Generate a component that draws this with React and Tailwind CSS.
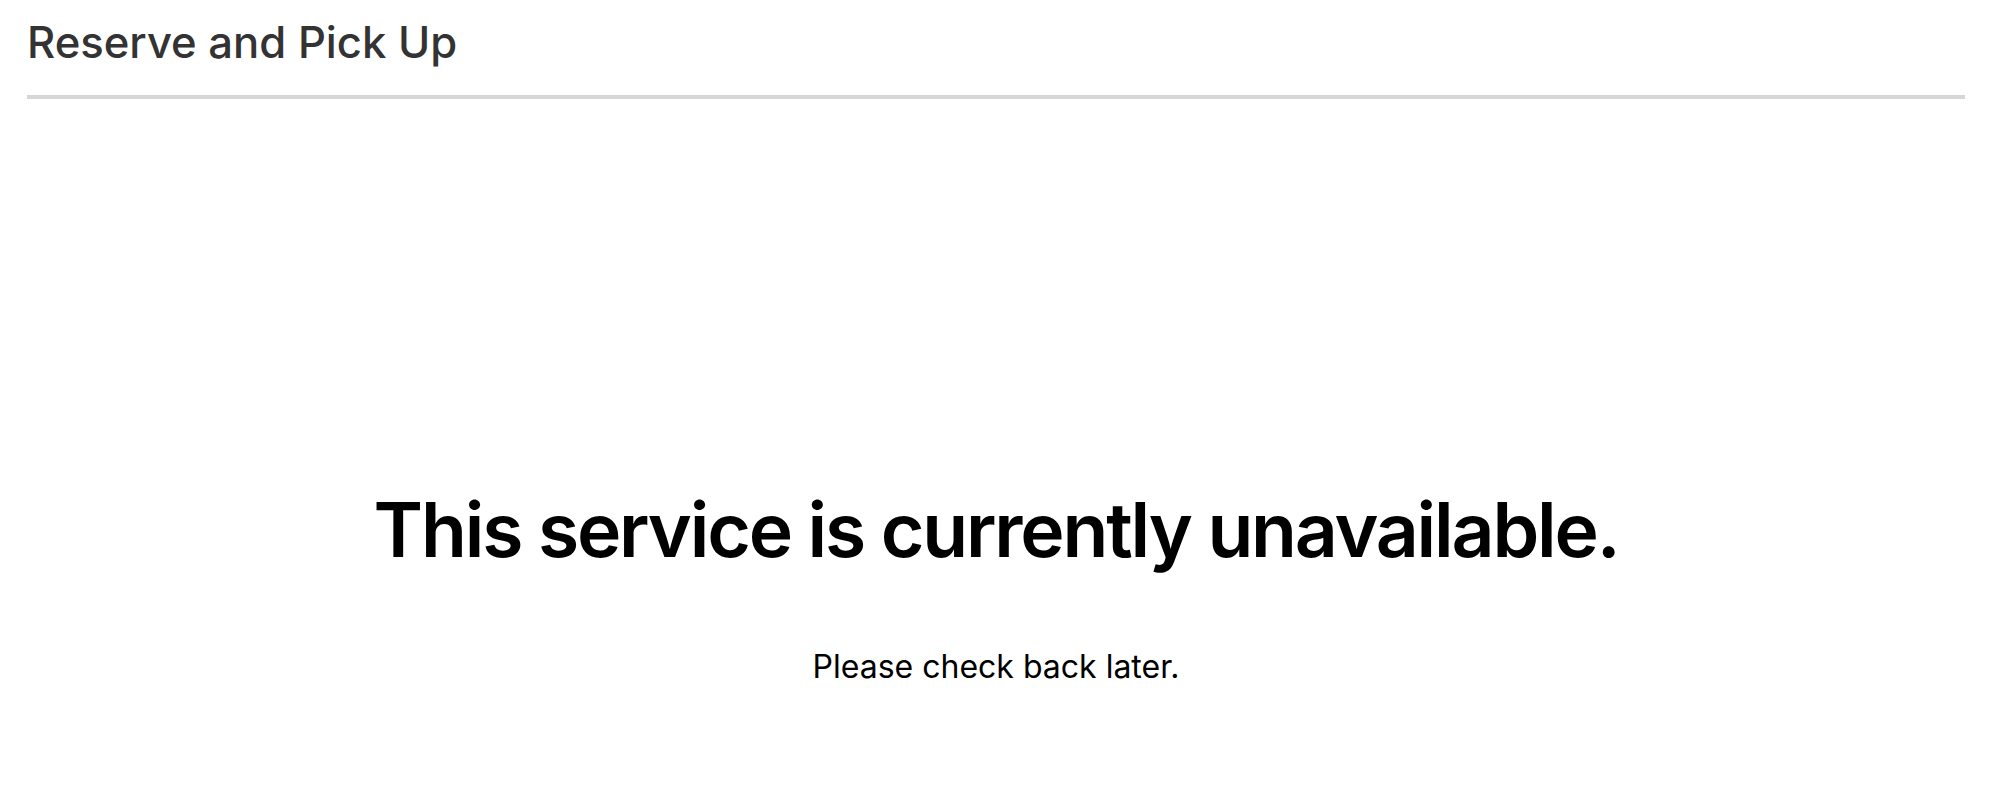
export default function App() {
  return (
    <div className="min-h-[810px] bg-white pl-[27px] pr-[35px]" style={{ fontFamily: 'Inter, "Noto Sans", sans-serif' }}>
      <header className="pt-[21px]">
        <h1 className="text-[43.6px] leading-none font-medium text-[#333333]">Reserve and Pick Up</h1>
        <div className="mt-[30px] h-[4px] bg-[#d6d6d6]" />
      </header>
      <main className="flex flex-col items-center text-black">
        <h2 className="mt-[393px] text-[75px] leading-none font-semibold tracking-[-0.029em]">This service is currently unavailable.</h2>
        <p className="mt-[84px] text-[32px] leading-none">Please check back later.</p>
      </main>
    </div>
  );
}
